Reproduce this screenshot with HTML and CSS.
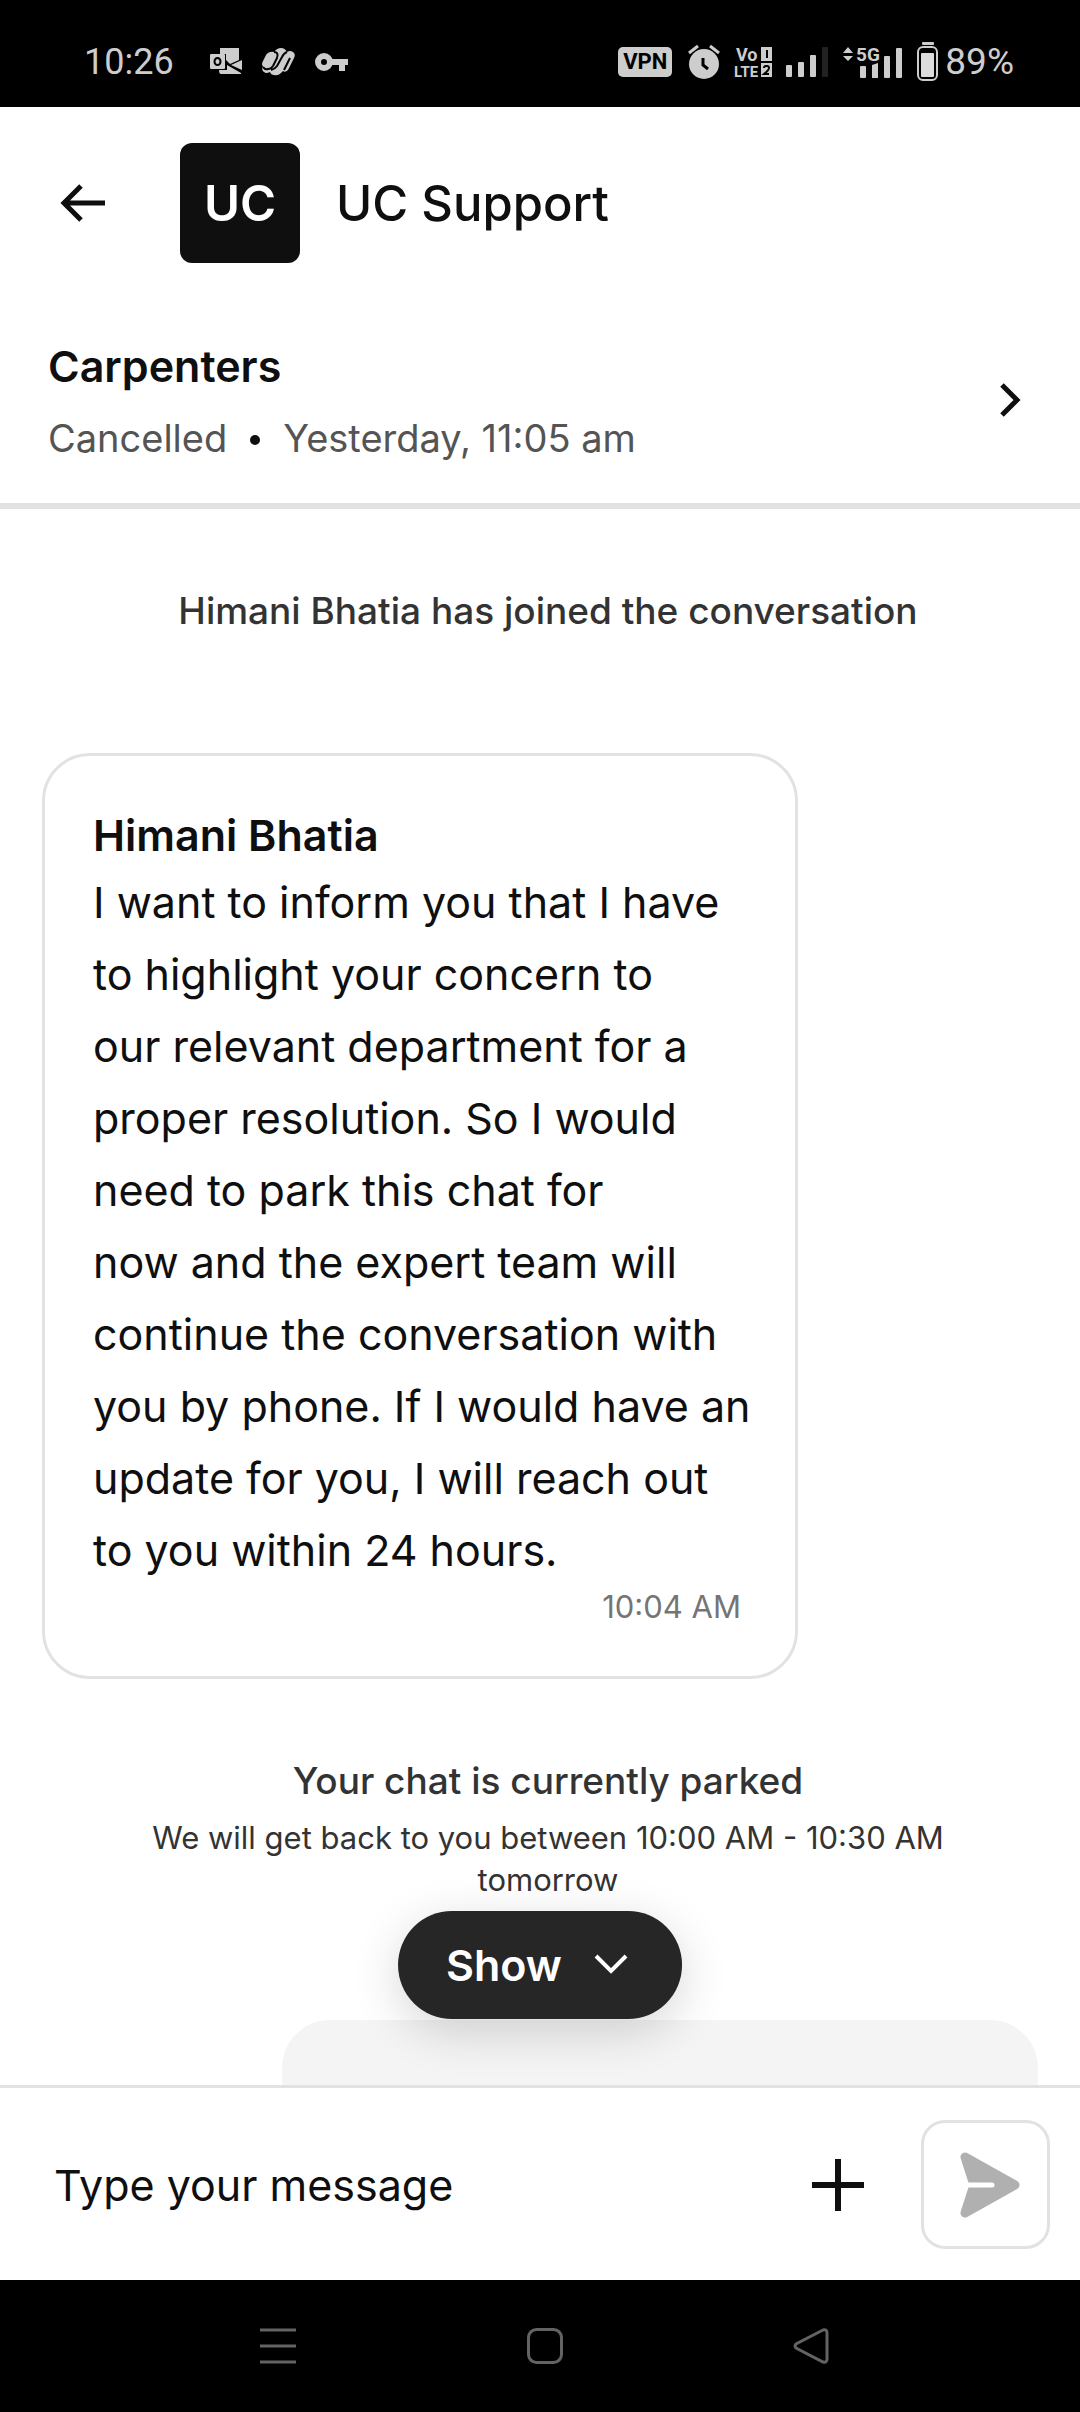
FILE: index.html
```
<!DOCTYPE html>
<html lang="en">
<head>
    <meta charset="UTF-8">
    <meta name="viewport" content="width=device-width, initial-scale=1.0">
    <title>UC Support</title>
    <link rel="stylesheet" href="styles.css">
</head>
<body>
    <div class="status-bar">
        <div class="status-left">
            <span class="status-time">10:26</span>
            <!-- mail -->
            <svg width="32" height="27" viewBox="0 0 32 27" fill="#cdcdcd">
                <path d="M10 0h19v12l-9 4-4-4V6h-6z"/>
                <path d="M32 12v10l-11-5zM9 22h8v-5l14 8v1H11q-2 0-2-4z"/>
                <rect x="0" y="6" width="15" height="15" rx="1"/>
                <ellipse cx="7.500" cy="13.500" rx="3" ry="3.500" fill="none" stroke="#000" stroke-width="2"/>
            </svg>
            <!-- assistant -->
            <svg width="33" height="28" viewBox="0 0 33 28">
                <path d="M12 4q3-4 7-4 4 0 6 4 3-2 6 0 3 2 1 6l-6 12q-3 3-5 1l-2 2q-3 3-7 2-3 0-4-3-4 2-6 0-3-2-1-6-2-1 0-5l3-6q3-4 8-3z" fill="#cdcdcd"/>
                <path d="M12 4q5 0 3 6l-4 8q-2 3-5 3-3 1-5-2M25 4q-3 1-5 5l-5 9q-2 3-6 4M28 10l-6 12" fill="none" stroke="#000" stroke-width="2"/>
            </svg>
            <!-- key -->
            <svg width="33" height="18" viewBox="0 0 33 18">
                <circle cx="9" cy="9" r="6" fill="none" stroke="#cdcdcd" stroke-width="6"/>
                <path d="M16 6h17v6h-3v6h-6v-6h-8z" fill="#cdcdcd"/>
            </svg>
        </div>
        <div class="status-right">
            <span class="vpn">VPN</span>
            <!-- alarm -->
            <svg width="32" height="36" viewBox="0 0 32 36">
                <circle cx="16" cy="20" r="15" fill="#cdcdcd"/>
                <path d="M1 9l9-7M31 9l-9-7" stroke="#cdcdcd" stroke-width="3"/>
                <path d="M15 14v7l5 4" fill="none" stroke="#000" stroke-width="3"/>
            </svg>
            <!-- VoLTE -->
            <svg class="volte" width="36" height="30" viewBox="0 0 36 30" fill="#cdcdcd">
                <text x="0" y="14">Vo</text>
                <text class="lte" x="-2" y="30">LTE</text>
                <path d="M25 0h11v14H25zM25 16h11v14H25z"/>
                <path d="M30 3h2v8h-2z" fill="#000"/>
                <path d="M28 21q0-2 2-2h1q2 0 2 2t-5 6h5" fill="none" stroke="#000" stroke-width="2"/>
            </svg>
            <!-- signal -->
            <svg width="43" height="30" viewBox="0 0 43 30" fill="#cdcdcd">
                <rect x="0" y="18" width="6" height="12" rx="1"/>
                <rect x="12" y="15" width="6" height="15" rx="1"/>
                <rect x="24" y="8" width="6" height="22" rx="1"/>
                <rect x="36" y="0" width="6" height="30" rx="1" fill="#222"/>
            </svg>
            <!-- 5G signal -->
            <svg class="fiveg" width="60" height="32" viewBox="0 0 60 32" fill="#cdcdcd">
                <path d="M0 7l5-6 5 6zM0 10h10l-5 5z"/>
                <text x="13" y="15">5G</text>
                <rect x="17" y="20" width="6" height="12" rx="1"/>
                <path d="M29 19l6-2v15h-6z"/>
                <rect x="41" y="10" width="6" height="22" rx="1"/>
                <rect x="53" y="2" width="6" height="30" rx="1"/>
            </svg>
            <!-- battery -->
            <svg width="22" height="40" viewBox="0 0 22 40">
                <rect x="5" y="0" width="12" height="3" rx="1" fill="#cdcdcd"/>
                <rect x="1" y="5" width="19" height="33" rx="5" fill="none" stroke="#cdcdcd" stroke-width="2"/>
                <rect x="4" y="11" width="13" height="24" rx="1" fill="#dcdcdc"/>
            </svg>
            <span class="battery-level">89%</span>
        </div>
    </div>

    <header class="header">
        <button class="icon-btn" type="button" aria-label="Back">
            <svg width="46" height="38" viewBox="0 0 46 38" fill="none" stroke="#0f0f0f" stroke-width="5">
                <path d="M45 19H4M21 2L4 19l17 17"/>
            </svg>
        </button>
        <div class="avatar">UC</div>
        <h1 class="title">UC Support</h1>
    </header>

    <a class="booking" href="#">
        <div>
            <h2 class="booking-name">Carpenters</h2>
            <p class="booking-info"><span>Cancelled</span><i class="dot"></i><span>Yesterday, 11:05 am</span></p>
        </div>
        <svg width="20" height="34" viewBox="0 0 20 34" fill="none" stroke="#0f0f0f" stroke-width="5">
            <path d="M2 2l15 15L2 32"/>
        </svg>
    </a>

    <main class="chat">
        <p class="notice">Himani Bhatia has joined the conversation</p>
        <article class="message">
            <h3 class="sender">Himani Bhatia</h3>
            <p class="message-text">I want to inform you that I have<br>to highlight your concern to<br>our relevant department for a<br>proper resolution. So I would<br>need to park this chat for<br>now and the expert team will<br>continue the conversation with<br>you by phone. If I would have an<br>update for you, I will reach out<br>to you within 24 hours.</p>
            <time class="message-time">10:04 AM</time>
        </article>
        <div class="parked">
            <p class="notice">Your chat is currently parked</p>
            <p class="parked-info">We will get back to you between 10:00 AM - 10:30 AM tomorrow</p>
        </div>
        <div class="message-own"></div>
        <button class="show-btn" type="button">
            Show
            <svg width="34" height="22" viewBox="0 0 34 22" fill="none" stroke="#fff" stroke-width="4">
                <path d="M2 2l15 15L32 2"/>
            </svg>
        </button>
    </main>

    <form class="composer">
        <input class="composer-input" type="text" placeholder="Type your message" aria-label="Type your message">
        <button class="icon-btn" type="button" aria-label="Add attachment">
            <svg width="52" height="52" viewBox="0 0 52 52" stroke="#0f0f0f" stroke-width="6">
                <path d="M26 0v52M0 26h52"/>
            </svg>
        </button>
        <button class="send-btn" type="button" aria-label="Send">
            <svg width="60" height="66" viewBox="0 0 60 66">
                <path d="M5 5l9 28-9 28 50-28z" fill="#b0b0b0" stroke="#b0b0b0" stroke-width="9" stroke-linejoin="round"/>
                <path d="M4 33h28" stroke="#fff" stroke-width="5" stroke-linecap="round"/>
            </svg>
        </button>
    </form>

    <nav class="nav-bar">
        <button class="icon-btn" type="button" aria-label="Recent apps">
            <svg width="36" height="36" viewBox="0 0 36 36" stroke="#636363" stroke-width="3">
                <path d="M0 2h36M0 18h36M0 34h36"/>
            </svg>
        </button>
        <button class="icon-btn" type="button" aria-label="Home">
            <svg width="36" height="36" viewBox="0 0 36 36" fill="none" stroke="#636363" stroke-width="3">
                <rect x="1.500" y="1.500" width="33" height="33" rx="8"/>
            </svg>
        </button>
        <button class="icon-btn" type="button" aria-label="Go back">
            <svg width="36" height="36" viewBox="0 0 36 36" fill="none" stroke="#636363" stroke-width="3">
                <path d="M30 2L3 16q-2 2 0 4l27 14q4 1 4-3V5q0-4-4-3z"/>
            </svg>
        </button>
    </nav>
</body>
</html>
```
FILE: styles.css
```
* {
    box-sizing: border-box;
}
body {
    margin: 0;
    min-height: 100vh;
    display: flex;
    flex-direction: column;
    font-family: Inter, sans-serif;
    color: #0f0f0f;
    background: #fff;
}
h1, h2, h3, p {
    margin: 0;
}
svg {
    display: block;
    flex: none;
    overflow: visible;
}
button {
    font: inherit;
    cursor: pointer;
}
.icon-btn {
    padding: 0;
    border: 0;
    background: none;
}

/* status bar */
.status-bar {
    display: flex;
    justify-content: space-between;
    align-items: center;
    height: 107px;
    padding: 16px 66px 0 84px;
    background: #000;
    color: #cdcdcd;
    font-family: Roboto, sans-serif;
    font-size: 36px;
}
.status-left {
    display: flex;
    align-items: center;
    gap: 20px;
}
.status-time {
    margin-right: 16px;
}
.status-right {
    display: flex;
    align-items: center;
    gap: 14px;
}
.vpn {
    margin-right: 2px;
    padding: 0 5px;
    border-radius: 5px;
    background: #cdcdcd;
    color: #000;
    font-size: 22px;
    font-weight: 700;
    line-height: 30px;
}
.volte {
    margin-left: 2px;
    font-size: 18px;
    font-weight: 700;
}
.volte .lte {
    font-size: 15px;
}
.fiveg {
    font-size: 19px;
    font-weight: 700;
}
.battery-level {
    margin-left: -8px;
    font-size: 37px;
}

/* header */
.header {
    display: flex;
    align-items: center;
    padding: 36px 60px;
}
.avatar {
    width: 120px;
    height: 120px;
    margin: 0 36px 0 74px;
    border-radius: 12px;
    background: #0f0f0f;
    color: #fff;
    font-size: 49px;
    font-weight: 600;
    line-height: 122px;
    text-align: center;
}
.title {
    font-size: 49px;
    font-weight: 500;
}

/* booking */
.booking {
    display: flex;
    justify-content: space-between;
    align-items: center;
    padding: 35px 60px 37px 48px;
    border-bottom: 6px solid #e2e2e2;
    color: inherit;
    text-decoration: none;
}
.booking-name {
    font-size: 43px;
    font-weight: 600;
    line-height: 64px;
}
.booking-info {
    display: flex;
    align-items: center;
    margin-top: 12px;
    color: #545454;
    font-size: 38px;
    line-height: 56px;
}
.dot {
    width: 10px;
    height: 10px;
    margin: 4px 23px 0;
    border-radius: 50%;
    background: #0f0f0f;
}

/* chat */
.chat {
    position: relative;
    display: flex;
    flex: 1;
    flex-direction: column;
    padding: 72px 42px 0;
    overflow: hidden;
}
.notice {
    padding-left: 16px;
    color: #333;
    font-size: 37px;
    font-weight: 500;
    line-height: 60px;
    text-align: center;
}
.message {
    display: flex;
    flex-direction: column;
    width: 756px;
    margin: 112px 0 72px;
    padding: 48px 40px 48px 48px;
    border: 3px solid #e2e2e2;
    border-radius: 48px;
}
.sender {
    font-size: 43px;
    font-weight: 600;
    line-height: 62px;
}
.message-text {
    font-size: 43px;
    line-height: 72px;
}
.message-time {
    align-self: flex-end;
    margin-right: 14px;
    color: #757575;
    font-size: 31px;
    line-height: 42px;
}
.parked-info {
    padding: 6px 92px 0 108px;
    color: #333;
    font-size: 31px;
    line-height: 42px;
    text-align: center;
}
.message-own {
    flex: 1;
    align-self: flex-end;
    width: 756px;
    margin-top: 119px;
    border-radius: 48px 48px 0 0;
    background: #f4f4f4;
}
.show-btn {
    position: absolute;
    bottom: 66px;
    left: 50%;
    display: flex;
    align-items: center;
    gap: 32px;
    height: 108px;
    padding: 0 54px 0 48px;
    border: 0;
    border-radius: 54px;
    background: #262626;
    box-shadow: 0 12px 48px rgba(0, 0, 0, 0.16);
    color: #fff;
    font-size: 43px;
    font-weight: 600;
    transform: translateX(-50%);
}

/* composer */
.composer {
    display: flex;
    align-items: center;
    padding: 32px 30px 31px 54px;
    border-top: 3px solid #e2e2e2;
}
.composer-input {
    flex: 1;
    min-width: 0;
    padding: 0;
    border: 0;
    outline: none;
    color: #0f0f0f;
    font: inherit;
    font-size: 43px;
}
.composer-input::placeholder {
    color: #0f0f0f;
    opacity: 1;
}
.send-btn {
    display: flex;
    align-items: center;
    justify-content: center;
    width: 129px;
    height: 129px;
    margin-left: 57px;
    padding: 0 0 0 8px;
    border: 3px solid #e2e2e2;
    border-radius: 24px;
    background: #fff;
}

/* system navigation */
.nav-bar {
    display: flex;
    justify-content: space-between;
    align-items: center;
    height: 132px;
    padding: 0 251px 0 260px;
    background: #000;
}
```
